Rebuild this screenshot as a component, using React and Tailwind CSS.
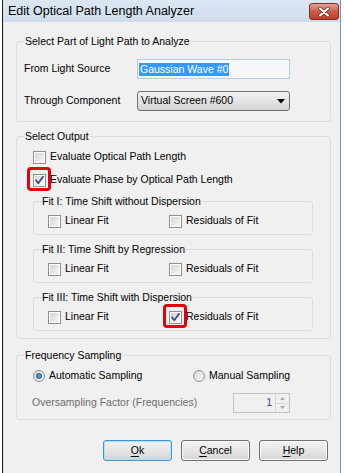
import React from "react";

const Check = ({ checked, highlight }) => (
  <span className="relative flex h-[13px] w-[13px] shrink-0">
    <span className="flex h-[13px] w-[13px] items-center justify-center border border-[#8e8f8f] bg-white">
      <span className="h-[9px] w-[9px] bg-linear-to-br from-[#d4d4d4] to-[#f8f8f8]" />
    </span>
    {checked && (
      <svg className="absolute left-0 top-0" width="13" height="13" viewBox="0 0 13 13">
        <path d="M3 6.2 L5.3 9.3 L10 2.8" fill="none" stroke="#35478a" strokeWidth="1.7" strokeLinecap="round" strokeLinejoin="round" />
      </svg>
    )}
    {highlight && (
      <span className="absolute -bottom-[4px] -left-[6px] -right-[5px] -top-[7px] rounded-[4px] border-[3px] border-[#e5000c]" />
    )}
  </span>
);

const CheckRow = ({ label, checked, highlight }) => (
  <div className="flex h-[16px] items-center gap-[4px]">
    <Check checked={checked} highlight={highlight} />
    <span>{label}</span>
  </div>
);

const Radio = ({ on }) => (
  <span className="flex h-[12px] w-[12px] shrink-0 items-center justify-center rounded-full border border-[#8e8f8f] bg-linear-to-br from-[#d6d6d6] to-[#fafafa]">
    {on && <span className="h-[6px] w-[6px] rounded-full bg-radial from-[#5ab0e6] to-[#13486e]" />}
  </span>
);

const Group = ({ title, children, className = "" }) => (
  <fieldset className={`rounded-[3px] border border-[#d5dfe5] ${className}`}>
    <legend className="ml-[7px] px-[1px] leading-[14px]">{title}</legend>
    {children}
  </fieldset>
);

const FitGroup = ({ title, residualsChecked }) => (
  <Group title={title} className="mt-[7px]">
    <div className="grid grid-cols-[121px_1fr] pb-[5px] pl-[14px] pt-[5px]">
      <CheckRow label="Linear Fit" />
      <CheckRow label="Residuals of Fit" checked={residualsChecked} highlight={residualsChecked} />
    </div>
  </Group>
);

const Button = ({ first, rest, primary }) => (
  <button
    type="button"
    className={`h-[21px] w-[69px] rounded-[3px] border bg-linear-to-b from-[#f2f2f2] via-[#e6e6e6] to-[#d4d4d4] ${
      primary ? "border-[#3c96d6] shadow-[inset_0_0_0_1px_#b3e1f8]" : "border-[#707070] shadow-[inset_0_0_0_1px_#fbfbfb]"
    }`}
  >
    <span className="underline underline-offset-2">{first}</span>
    {rest}
  </button>
);

export default function App() {
  return (
    <div className="h-[473px] w-[344px] overflow-hidden bg-white font-['Liberation_Sans',Arial,sans-serif] text-[10.5px] text-black">
      <div className="ml-[2px] flex h-full w-[339px] flex-col border-l border-r border-l-[#1c1c1c] border-r-[#6f93bd] bg-[#f0f0f0]">
        <div className="flex h-[22px] items-center justify-between bg-linear-to-b from-[#dde7f3] to-[#cddcee] pl-[5px]">
          <span className="text-[12.5px] leading-none">Edit Optical Path Length Analyzer</span>
          <span className="mr-[1px] mt-[1px] flex h-[17px] w-[30px] items-center justify-center rounded-[3px] border border-[#7a3025] bg-linear-to-b from-[#e3a195] via-[#cc5a48] to-[#c43a23]">
            <svg width="12" height="10" viewBox="0 0 12 10">
              <path d="M2 1.5 L10 8.5 M10 1.5 L2 8.5" stroke="#5b2219" strokeWidth="3.6" strokeLinecap="round" />
              <path d="M2 1.5 L10 8.5 M10 1.5 L2 8.5" stroke="#ffffff" strokeWidth="2.2" strokeLinecap="round" />
            </svg>
          </span>
        </div>

        <div className="flex flex-1 flex-col border-l border-[#d3e1f1]">
          <Group title="Select Part of Light Path to Analyze" className="ml-[12px] mt-[12px] w-[315px]">
            <div className="flex flex-col gap-[12px] pb-[10px] pl-[7px] pt-[11px]">
              <div className="flex h-[20px] items-center">
                <span className="w-[113px]">From Light Source</span>
                <div className="flex h-[20px] w-[153px] items-center border border-[#b7cbe0] bg-[#f5f7fa] pl-[1px]">
                  <span className="bg-[#3399ff] px-[1px] leading-[13px] text-white">Gaussian Wave #0</span>
                </div>
              </div>
              <div className="flex h-[20px] items-center">
                <span className="w-[113px]">Through Component</span>
                <div className="flex h-[20px] w-[153px] items-center justify-between rounded-[3px] border border-[#707070] bg-linear-to-b from-[#f2f2f2] via-[#e4e4e4] to-[#d3d3d3] pl-[3px] pr-[4px]">
                  <span>Virtual Screen #600</span>
                  <svg width="8" height="5" viewBox="0 0 8 5">
                    <path d="M0 0 L8 0 L4 4.5 Z" fill="#000" />
                  </svg>
                </div>
              </div>
            </div>
          </Group>

          <Group title="Select Output" className="ml-[12px] mt-[7px] w-[315px]">
            <div className="flex flex-col pb-[7px] pl-[16px] pr-[17px] pt-[6px]">
              <CheckRow label="Evaluate Optical Path Length" />
              <div className="mt-[7px]">
                <CheckRow label="Evaluate Phase by Optical Path Length" checked highlight />
              </div>
              <Group title="Fit I: Time Shift without Dispersion" className="mt-[6px]">
                <div className="grid grid-cols-[121px_1fr] pb-[5px] pl-[14px] pt-[5px]">
                  <CheckRow label="Linear Fit" />
                  <CheckRow label="Residuals of Fit" />
                </div>
              </Group>
              <FitGroup title="Fit II: Time Shift by Regression" />
              <FitGroup title="Fit III: Time Shift with Dispersion" residualsChecked />
            </div>
          </Group>

          <Group title="Frequency Sampling" className="ml-[12px] mt-[9px] w-[315px]">
            <div className="flex flex-col pb-[6px] pl-[16px] pt-[6px]">
              <div className="grid h-[16px] grid-cols-[160px_1fr] items-center">
                <div className="flex items-center gap-[4px]">
                  <Radio on />
                  <span>Automatic Sampling</span>
                </div>
                <div className="flex items-center gap-[4px]">
                  <Radio />
                  <span>Manual Sampling</span>
                </div>
              </div>
              <div className="mt-[9px] flex h-[20px] items-center">
                <span className="-ml-[1px] w-[201px] text-[#6d6d6d]">Oversampling Factor (Frequencies)</span>
                <div className="flex h-[20px] w-[57px] items-center border border-[#c3c3c3] bg-[#f0f0f0]">
                  <span className="flex-1 pr-[3px] text-right text-[#4b3f86]">1</span>
                  <div className="flex h-[18px] w-[14px] flex-col border-l border-[#d8d8d8]">
                    <span className="flex flex-1 items-center justify-center border-b border-[#d8d8d8]">
                      <svg width="5" height="3" viewBox="0 0 5 3"><path d="M0 3 L5 3 L2.5 0 Z" fill="#a8a8a8" /></svg>
                    </span>
                    <span className="flex flex-1 items-center justify-center">
                      <svg width="5" height="3" viewBox="0 0 5 3"><path d="M0 0 L5 0 L2.5 3 Z" fill="#a8a8a8" /></svg>
                    </span>
                  </div>
                </div>
              </div>
            </div>
          </Group>

          <div className="mt-[20px] flex gap-[9px] pl-[99px]">
            <Button first="O" rest="k" primary />
            <Button first="C" rest="ancel" />
            <Button first="H" rest="elp" />
          </div>
        </div>
      </div>
    </div>
  );
}
